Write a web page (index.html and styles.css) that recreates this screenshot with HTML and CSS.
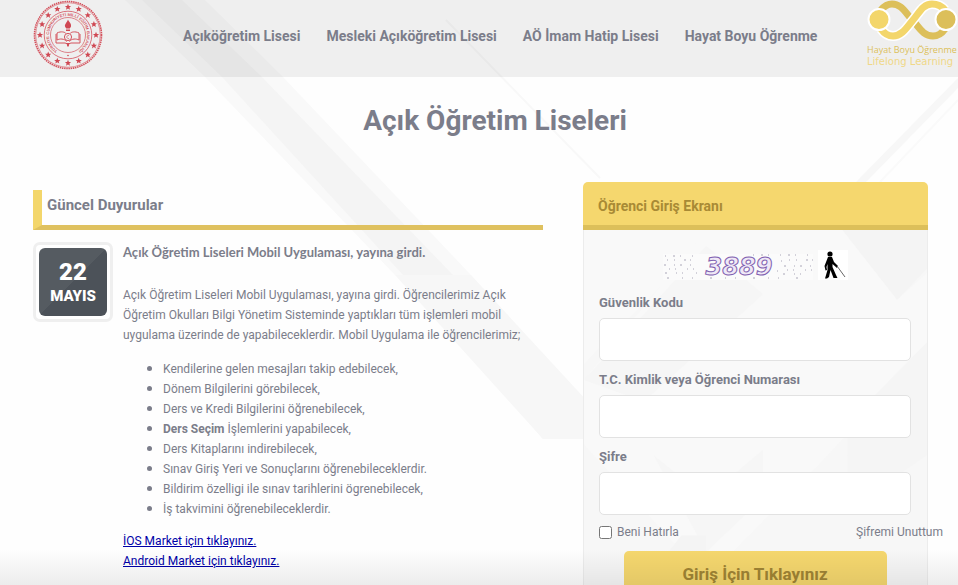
FILE: index.html
```
<!DOCTYPE html>
<html lang="tr">
<head>
<meta charset="utf-8">
<meta name="viewport" content="width=device-width, initial-scale=1">
<title>Açık Öğretim Liseleri</title>
<link rel="stylesheet" href="styles.css">
</head>
<body>
<svg class="backdrop" viewBox="0 0 958 585" preserveAspectRatio="xMinYMin slice" aria-hidden="true">
  <path d="M125 0H205L283 77L471 275H395L205 77Z" fill="#f9f9f9"/>
  <path d="M142 0H182L262 77L453 275L500 330L583 415V439H543L403 275L222 77Z" fill="#f4f4f4"/>
  <path d="M395 275H471L600 415V439H543Z" fill="#f7f7f7"/>
  <path d="M446 20L600 178" stroke="#f8f8f8" stroke-width="2"/>
  <path d="M958 78L856 182H866L958 88Z" fill="#f7f7f7"/>
  <path d="M958 100L880 182" stroke="#fafafa" stroke-width="2"/>
</svg>
<header class="site-header">
  <a class="seal" href="#" aria-label="Millî Eğitim Bakanlığı">
    <svg viewBox="0 0 70 70" width="70" height="70">
      <defs>
        <path id="ring" d="M30 53.300A19 19 0 1 1 40 53.300"/>
        <path id="star" d="M0-3.200L.9-1 3.100-1 1.400.5 2 2.700 0 1.400-2 2.700-1.400.5-3.100-1-.9-1Z"/>
      </defs>
      <g fill="none" stroke="#d4525d">
        <circle cx="35" cy="35" r="33.500" stroke-width="1.600" stroke-dasharray="1.500 .7"/>
        <circle cx="35" cy="35" r="32.300" stroke-width=".6"/>
        <circle cx="35" cy="35" r="23.800" stroke-width=".8"/>
        <circle cx="35" cy="35" r="17.500" stroke-width=".7"/>
      </g>
      <g fill="#cf4853">
        <use href="#star" x="35" y="7"/><use href="#star" x="45.700" y="9.100"/><use href="#star" x="54.800" y="15.200"/><use href="#star" x="60.900" y="24.300"/>
        <use href="#star" x="63" y="35"/><use href="#star" x="60.900" y="45.700"/><use href="#star" x="54.800" y="54.800"/><use href="#star" x="45.700" y="60.900"/>
        <use href="#star" x="35" y="63"/><use href="#star" x="24.300" y="60.900"/><use href="#star" x="15.200" y="54.800"/><use href="#star" x="9.100" y="45.700"/>
        <use href="#star" x="7" y="35"/><use href="#star" x="9.100" y="24.300"/><use href="#star" x="15.200" y="15.200"/><use href="#star" x="24.300" y="9.100"/>
        <circle cx="35" cy="55.500" r=".8"/>
        <path d="M35 19.500C36 22 38.500 23 38 26.500L36.800 28.500H33.200L32 26.500C31.500 24 34 22.500 35 19.500Z"/>
        <path d="M33 29.500H37V31H33ZM33.500 43H36.500L35.700 46.500H34.300Z"/>
      </g>
      <g fill="none" stroke="#d4525d">
        <path d="M34 41.500C31 38.500 27 38.500 24 40V33C28 31 32 32 33 33.500M36 41.500C39 38.500 43 38.500 46 40V33C42 31 38 32 37 33.500M23 34V43H32Q35 45 38 43H47V34" stroke-width="1"/>
        <circle cx="35" cy="37" r="3.600" fill="#eee" stroke-width="1"/>
        <path d="M36 35.500A1.600 1.600 0 1 0 36 38.500" stroke-width=".7"/>
      </g>
      <text class="seal-text" text-anchor="middle"><textPath href="#ring" startOffset="50%">TÜRKİYE CUMHURİYETİ MİLLÎ EĞİTİM BAKANLIĞI</textPath></text>
    </svg>
  </a>
  <nav class="main-nav">
    <a href="#">Açıköğretim Lisesi</a>
    <a href="#">Mesleki Açıköğretim Lisesi</a>
    <a href="#">AÖ İmam Hatip Lisesi</a>
    <a href="#">Hayat Boyu Öğrenme</a>
  </nav>
  <a class="partner" href="#">
    <svg viewBox="0 0 91 42" width="91" height="42" aria-hidden="true">
      <g fill="none" stroke-width="7">
        <path d="M14 10Q19 4 25 4C34 4 38 12 45 19.500S56 36 66 36Q73 36 78 29" stroke="#dcbf5a"/>
        <path d="M14 29Q19 36 26 36C35 36 40 27 46 20S56 4 65 4Q73 4 78 10" stroke="#fff" stroke-width="10"/>
        <path d="M14 29Q19 36 26 36C35 36 40 27 46 20S56 4 65 4Q73 4 78 10" stroke="#f3d66b"/>
      </g>
      <circle cx="12" cy="19.500" r="10.500" fill="#f3d66b" stroke="#fff" stroke-width="2"/>
      <circle cx="79" cy="19.500" r="10.500" fill="#dcbf5a" stroke="#fff" stroke-width="2"/>
    </svg>
    <span class="partner-name">Hayat Boyu Öğrenme</span>
    <span class="partner-sub">Lifelong Learning</span>
  </a>
</header>

<main>
  <h1>Açık Öğretim Liseleri</h1>
  <div class="columns">
    <section class="news">
      <h2>Güncel Duyurular</h2>
      <article>
        <time class="date" datetime="05-22"><span class="day">22</span><span class="month">MAYIS</span></time>
        <div class="story">
          <h3>Açık Öğretim Liseleri Mobil Uygulaması, yayına girdi.</h3>
          <p>Açık Öğretim Liseleri Mobil Uygulaması, yayına girdi. Öğrencilerimiz Açık<br>Öğretim Okulları Bilgi Yönetim Sisteminde yaptıkları tüm işlemleri mobil<br>uygulama üzerinde de yapabileceklerdir. Mobil Uygulama ile öğrencilerimiz;</p>
          <ul>
            <li>Kendilerine gelen mesajları takip edebilecek,</li>
            <li>Dönem Bilgilerini görebilecek,</li>
            <li>Ders ve Kredi Bilgilerini öğrenebilecek,</li>
            <li><strong>Ders Seçim</strong> İşlemlerini yapabilecek,</li>
            <li>Ders Kitaplarını indirebilecek,</li>
            <li>Sınav Giriş Yeri ve Sonuçlarını öğrenebileceklerdir.</li>
            <li>Bildirim özelligi ile sınav tarihlerini ögrenebilecek,</li>
            <li>İş takvimini öğrenebileceklerdir.</li>
          </ul>
          <div class="stores">
            <a href="#">İOS Market için tıklayınız.</a>
            <a href="#">Android Market için tıklayınız.</a>
          </div>
        </div>
      </article>
    </section>

    <section class="login">
      <h2>Öğrenci Giriş Ekranı</h2>
      <form>
        <svg class="facets" viewBox="0 0 345 360" preserveAspectRatio="none" aria-hidden="true">
          <path d="M0 0H123V10L0 125Z" fill="#f9f9f9"/>
          <path d="M123 0H260L315 65L345 40V110L240 215L123 325L0 200V140Z" fill="#f9f9f9"/>
          <path d="M0 140L123 15L180 60L60 160Z" fill="#f6f6f6"/>
          <path d="M260 0H345V36L315 65Z" fill="#f4f4f4"/>
          <path d="M345 105L265 180V260L345 210Z" fill="#f5f5f5"/>
          <path d="M70 210L123 250L180 205V250L123 300Z" fill="#f6f6f6"/>
          <path d="M98 285H123V330H60Z" fill="#f4f4f4"/>
        </svg>
        <div class="captcha">
          <svg viewBox="0 0 150 30" width="150" height="30" role="img" aria-label="3889">
            <rect y="4" width="150" height="26" fill="#fbfbfb"/>
            <g fill="none" stroke="#aaa7b8" stroke-width="1">
              <path d="M2 6H34M90 5H150" stroke-dasharray="1 7 2 5 1 11"/>
              <path d="M4 10H30M118 11H122M126 10H150" stroke-dasharray="1 6 1 9 2 4"/>
              <path d="M1 15H28M121 16H148" stroke-dasharray="2 8 1 5"/>
              <path d="M6 19H32M114 21H118M124 20H150" stroke-dasharray="1 5 1 11"/>
              <path d="M2 23H34M120 24H150" stroke-dasharray="2 9 1 5 1 13"/>
              <path d="M4 28H148" stroke-dasharray="2 13 1 9 1 17"/>
            </g>
            <text class="code" x="76" y="25" text-anchor="middle">3889</text>
          </svg>
          <button class="listen" type="button" aria-label="Sesli kod">
            <svg viewBox="0 0 30 30" width="30" height="30" aria-hidden="true">
              <circle cx="12" cy="4" r="2.600"/>
              <path d="M10 7H14L16 12L20 16L19 18L14.500 14V17L18 25L19.500 28H15.500L12.500 20L11 27L9 28.500H7L9.500 20V14L8.500 17L9 20L7.500 20.500L6.500 16Z"/>
              <path d="M19 16L27 27" fill="none" stroke="#666" stroke-width="1"/>
            </svg>
          </button>
        </div>
        <label for="code">Güvenlik Kodu</label>
        <input id="code" class="field" type="text">
        <label for="student">T.C. Kimlik veya Öğrenci Numarası</label>
        <input id="student" class="field" type="text">
        <label for="password">Şifre</label>
        <input id="password" class="field" type="password">
        <div class="options">
          <input id="remember" type="checkbox">
          <label for="remember">Beni Hatırla</label>
          <a href="#">Şifremi Unuttum</a>
        </div>
        <button class="submit" type="submit">Giriş İçin Tıklayınız</button>
      </form>
    </section>
  </div>
</main>
<div class="fade"></div>
</body>
</html>
```
FILE: styles.css
```
* { box-sizing: border-box; }

body {
  margin: 0;
  height: 100vh;
  overflow: hidden;
  position: relative;
  background: #fefefe;
  color: #7b7d8a;
  font: 12px/20px Roboto, "Liberation Sans", sans-serif;
}

h1, h2, h3, p, ul { margin: 0; }

.backdrop {
  position: absolute;
  inset: 0;
  width: 100%;
  height: 100%;
  z-index: -1;
}

.site-header {
  display: flex;
  align-items: flex-start;
  height: 77px;
  padding-left: 33px;
  background: rgba(0, 0, 0, 0.06);
}

.seal, .seal svg, .partner svg { display: block; }

.seal-text {
  fill: #d4525d;
  font: bold 4px "Liberation Sans", sans-serif;
}

.main-nav {
  display: flex;
  gap: 26px;
  margin-left: 80px;
  padding-top: 26px;
  white-space: nowrap;
}

.main-nav a {
  color: inherit;
  font-size: 14px;
  font-weight: 700;
  text-decoration: none;
}

.partner {
  display: flex;
  flex-direction: column;
  width: 91px;
  margin-left: auto;
  color: #dcbf5a;
  line-height: 12px;
  text-decoration: none;
  white-space: nowrap;
}

.partner-name { margin-top: 2px; font-family: "Open Sans", sans-serif; font-size: 9px; }
.partner-sub { color: #f0d888; font-family: "DejaVu Sans", sans-serif; font-size: 10px; }

main { padding: 24px 30px 0 33px; }

h1 {
  padding-left: 29px;
  font-size: 28px;
  line-height: 40px;
  text-align: center;
}

.columns {
  display: grid;
  grid-template-columns: minmax(0, 510fr) minmax(0, 345fr);
  gap: 40px;
  margin-top: 41px;
}

h2 { font-size: 15px; line-height: 20px; }

.news { padding-top: 8px; }

.news h2 {
  padding: 5px 0 10px 5px;
  border-left: 9px solid #f3d66b;
  border-bottom: 5px solid #dfc15f;
}

.news article {
  display: flex;
  align-items: flex-start;
  gap: 10px;
  padding-top: 12px;
}

.date {
  display: flex;
  flex: none;
  flex-direction: column;
  align-items: center;
  justify-content: center;
  width: 80px;
  height: 80px;
  padding: 3px;
  border: 3px solid #efefef;
  border-radius: 7px;
  background: #fff;
  color: #fff;
  font-weight: 900;
}

.date::before {
  content: "";
  position: absolute;
  width: 68px;
  height: 68px;
  border-radius: 6px;
  background: linear-gradient(135deg, #555b61 50%, #4c5259 50%);
}

.date span { position: relative; }
.day { font-size: 24px; line-height: 28px; }
.month { font-size: 15px; line-height: 20px; }

.story { white-space: nowrap; }
.story h3 { font: 700 13px/20px Lato, "Liberation Sans", sans-serif; }
.story p { margin-top: 23px; }
.story ul { margin-top: 13px; padding-left: 40px; }
.story li { height: 20px; }
.story li::marker { font-size: 15px; }
.stores { display: flex; flex-direction: column; align-items: flex-start; margin-top: 13px; }
.stores a { color: #0000a8; }

.login h2 {
  height: 48px;
  padding: 14px 15px 9px;
  border-bottom: 5px solid #dcbf5a;
  border-radius: 5px 5px 0 0;
  background: #f5d76e;
  color: #a88a35;
  font-size: 14px;
}

.login form {
  position: relative;
  padding: 20px 16px 20px 15px;
  border: 1px solid #ececec;
  border-top: 0;
  background: #f7f7f7;
}

.facets {
  position: absolute;
  inset: 0;
  width: 100%;
  height: 100%;
}

.login form > :not(.facets) { position: relative; }

.captcha {
  display: flex;
  justify-content: center;
  gap: 5px;
  height: 30px;
}

.code {
  fill: #efe8f6;
  stroke: #8060b0;
  stroke-width: 1;
  font: italic bold 24px "DejaVu Sans", sans-serif;
}

.listen {
  width: 30px;
  height: 30px;
  padding: 0;
  border: 0;
  background: #fff;
}

form > label { display: block; margin-top: 13px; font-weight: 700; font-size: 13px; }
.field + label { margin-top: 9px; }

.field {
  display: block;
  width: 100%;
  height: 43px;
  margin-top: 5px;
  padding: 0 12px;
  border: 1px solid #e2e2e2;
  border-radius: 5px;
  background: #fff;
  font: inherit;
}

.options {
  display: flex;
  align-items: center;
  gap: 5px;
  margin: 7px -32px 0 0;
}

.options input { width: 13px; height: 13px; margin: 0; }
.options a { margin-left: auto; color: inherit; text-decoration: none; }

.submit {
  display: block;
  width: 263px;
  height: 45px;
  margin: 9px auto 0;
  border: 0;
  border-radius: 5px;
  background: #f5d76e;
  color: #a08434;
  font: 700 17px/20px Roboto, "Liberation Sans", sans-serif;
}

.fade {
  position: absolute;
  inset: auto 0 0;
  height: 36px;
  background: linear-gradient(rgba(0, 0, 0, 0), rgba(0, 0, 0, 0.07));
  pointer-events: none;
}
```
